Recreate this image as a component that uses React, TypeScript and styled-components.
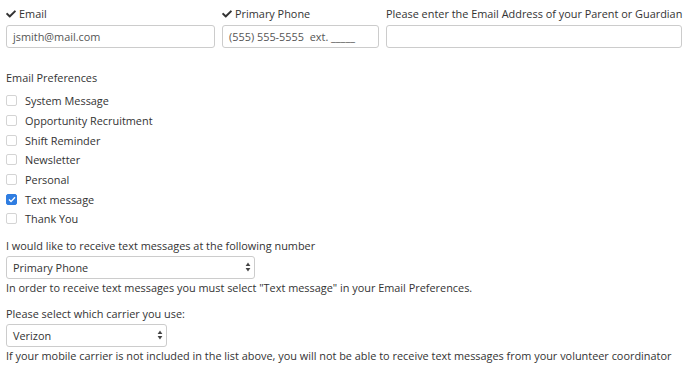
import styled, { createGlobalStyle } from 'styled-components';
import { FaCheck } from 'react-icons/fa';

const GlobalStyle = createGlobalStyle`
  body {
    margin: 0;
    background: #fff;
    font-family: "Open Sans", "Liberation Sans", sans-serif;
    font-size: 10.9px;
    color: #333;
  }
`;

const Page = styled.div`
  padding: 6px 6px 0 6px;
  width: 676px;
`;

const TopRow = styled.div`
  display: grid;
  grid-template-columns: 209px 157px 296px;
  column-gap: 7px;
`;

const Field = styled.div`
  display: flex;
  flex-direction: column;
  gap: 3px;
`;

const FieldLabel = styled.label`
  display: flex;
  align-items: center;
  gap: 3px;
  height: 16px;
  line-height: 16px;
  white-space: nowrap;
`;

const TextInput = styled.div`
  height: 23px;
  box-sizing: border-box;
  border: 1px solid #ccc;
  border-radius: 3px;
  padding: 0 6px;
  display: flex;
  align-items: center;
  color: #555;
  white-space: pre;
`;

const SectionTitle = styled.div`
  margin-top: 21px;
  line-height: 18px;
`;

const CheckList = styled.div`
  margin-top: 4px;
  display: flex;
  flex-direction: column;
`;

const CheckRow = styled.label`
  display: flex;
  align-items: center;
  height: 19.7px;
  gap: 8px;
`;

const Box = styled.span<{ $checked?: boolean }>`
  width: 11px;
  height: 11px;
  box-sizing: border-box;
  border-radius: 2px;
  border: 1px solid ${(p) => (p.$checked ? '#2f7de1' : '#d4d4d4')};
  background: ${(p) => (p.$checked ? '#2f7de1' : '#fff')};
  display: flex;
  align-items: center;
  justify-content: center;
`;

const Prompt = styled.div<{ $top: number }>`
  margin-top: ${(p) => p.$top}px;
  line-height: 18px;
`;

const Select = styled.div<{ $width: number }>`
  width: ${(p) => p.$width}px;
  height: 23px;
  box-sizing: border-box;
  border: 1px solid #ccc;
  border-radius: 3px;
  padding: 0 3px 0 6px;
  display: flex;
  align-items: center;
  justify-content: space-between;
  margin-top: 1px;
`;

const Note = styled.div`
  line-height: 18px;
  white-space: nowrap;
`;

function Arrows() {
  return (
    <svg width="6" height="10" viewBox="0 0 6 10">
      <path d="M3 0.5 L5.4 4 L0.6 4 Z" fill="#444" />
      <path d="M3 9.5 L5.4 6 L0.6 6 Z" fill="#444" />
    </svg>
  );
}

const prefs = [
  'System Message',
  'Opportunity Recruitment',
  'Shift Reminder',
  'Newsletter',
  'Personal',
  'Text message',
  'Thank You',
];

export default function App() {
  return (
    <Page>
      <GlobalStyle />
      <TopRow>
        <Field>
          <FieldLabel>
            <FaCheck size={10} color="#333" />
            Email
          </FieldLabel>
          <TextInput>jsmith@mail.com</TextInput>
        </Field>
        <Field>
          <FieldLabel>
            <FaCheck size={10} color="#333" />
            Primary Phone
          </FieldLabel>
          <TextInput>(555) 555-5555  ext. _____</TextInput>
        </Field>
        <Field>
          <FieldLabel>Please enter the Email Address of your Parent or Guardian</FieldLabel>
          <TextInput />
        </Field>
      </TopRow>

      <SectionTitle>Email Preferences</SectionTitle>
      <CheckList>
        {prefs.map((p) => {
          const on = p === 'Text message';
          return (
            <CheckRow key={p}>
              <Box $checked={on}>
                {on && (
                  <svg width="8" height="7" viewBox="0 0 8 7">
                    <path d="M1 3.6 L3 5.6 L7 1.2" fill="none" stroke="#fff" strokeWidth="1.4" />
                  </svg>
                )}
              </Box>
              {p}
            </CheckRow>
          );
        })}
      </CheckList>

      <Prompt $top={8}>I would like to receive text messages at the following number</Prompt>
      <Select $width={249}>
        Primary Phone
        <Arrows />
      </Select>
      <Note>In order to receive text messages you must select "Text message" in your Email Preferences.</Note>

      <Prompt $top={8}>Please select which carrier you use:</Prompt>
      <Select $width={161}>
        Verizon
        <Arrows />
      </Select>
      <Note>
        If your mobile carrier is not included in the list above, you will not be able to receive text
        messages from your volunteer coordinator
      </Note>
    </Page>
  );
}
